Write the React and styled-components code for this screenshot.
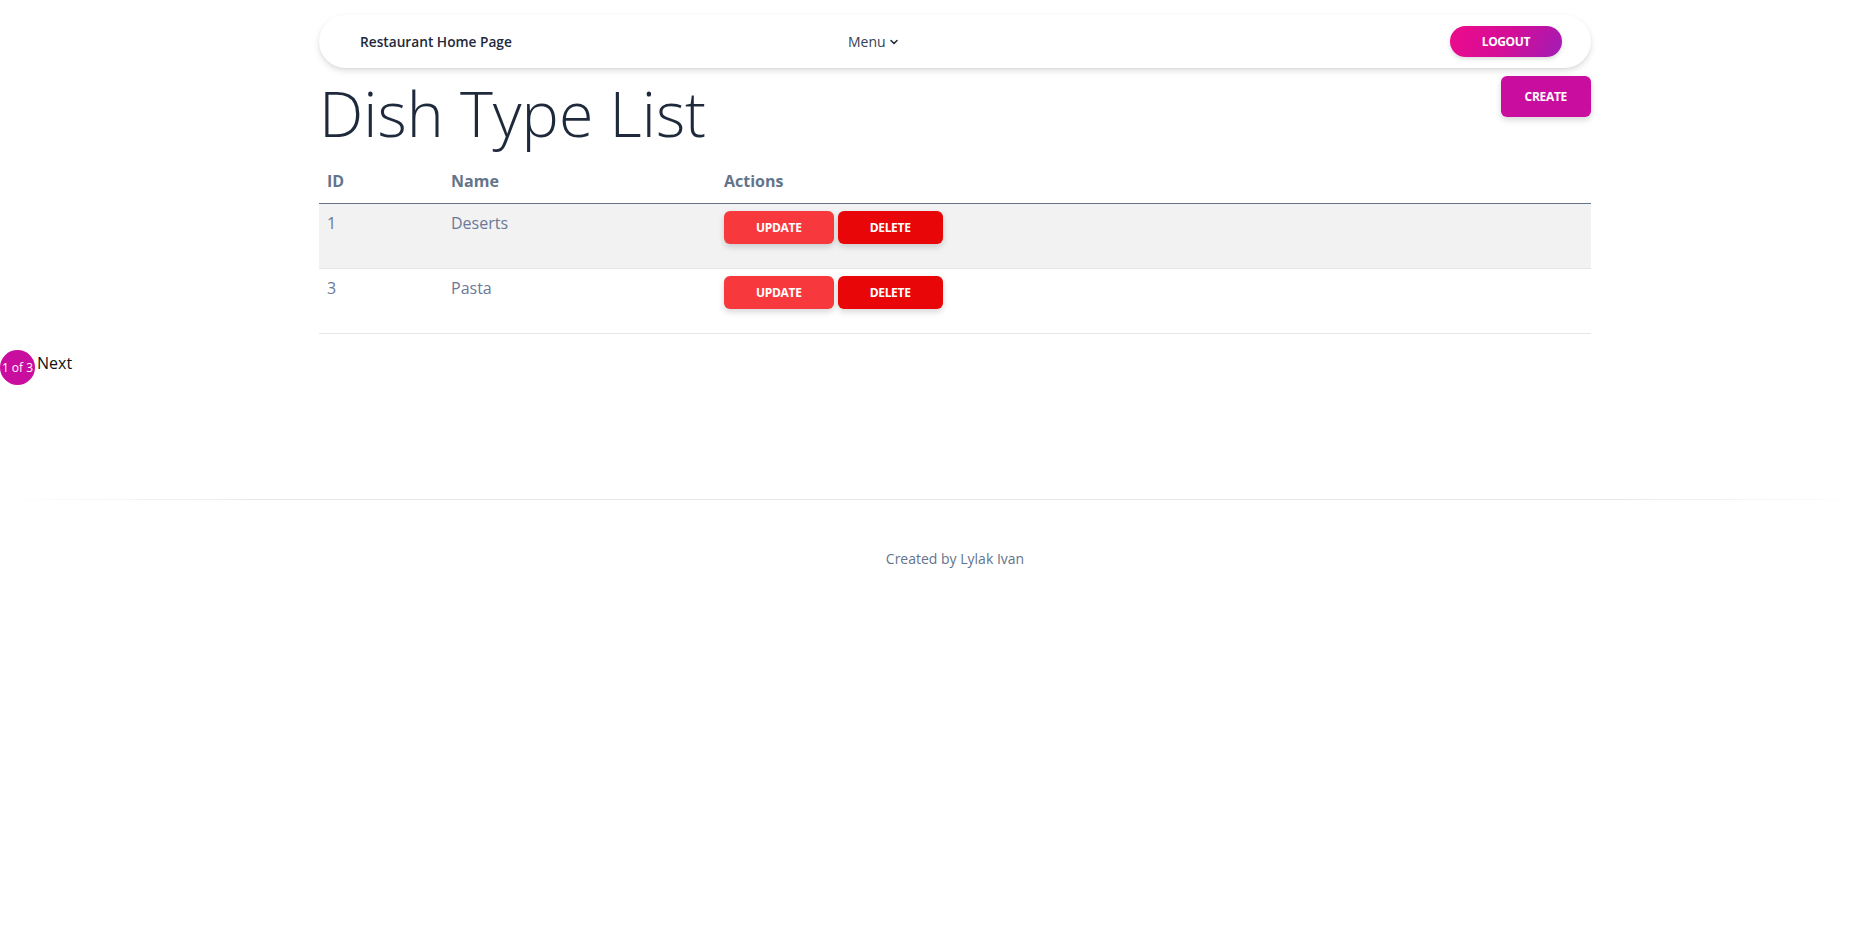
import React from "react";
import styled, { createGlobalStyle } from "styled-components";

const GlobalStyle = createGlobalStyle`
  html, body { margin: 0; padding: 0; background: #ffffff; }
  body { font-family: "Open Sans", "Noto Sans", Arial, sans-serif; color: #1e293b; }
  * { box-sizing: border-box; }
`;

const Page = styled.div`
  padding-left: 40px;
`;

const Container = styled.div`
  max-width: 1272px;
  margin: 0 auto;
`;

const Navbar = styled.nav`
  margin-top: 15px;
  height: 53px;
  border-radius: 27px;
  background: #fff;
  box-shadow: 0 3px 6px rgba(0, 0, 0, 0.12), 0 1px 2px rgba(0, 0, 0, 0.05);
  display: grid;
  grid-template-columns: 488px auto 1fr;
  align-items: center;
  padding: 0 29px 0 41px;
`;

const Brand = styled.a`
  font-size: 13.7px;
  font-weight: 600;
  color: #1e293b;
  text-decoration: none;
`;

const MenuToggle = styled.button`
  display: flex;
  align-items: center;
  gap: 2px;
  border: none;
  background: none;
  padding: 0;
  font-family: inherit;
  font-size: 14px;
  font-weight: 400;
  color: #334155;
  cursor: pointer;
`;

const PillButton = styled.button`
  justify-self: end;
  height: 31px;
  padding: 0 32px;
  border: none;
  border-radius: 16px;
  background: linear-gradient(120deg, #ee0b8b 0%, #d40d97 50%, #a11cb5 100%);
  color: #fff;
  font-family: inherit;
  font-size: 12px;
  font-weight: 700;
  letter-spacing: -0.4px;
  text-transform: uppercase;
  box-shadow: 0 2px 4px rgba(0, 0, 0, 0.15);
  cursor: pointer;
`;

const Header = styled.div`
  display: flex;
  justify-content: space-between;
  align-items: flex-start;
  margin-top: 8px;
`;

const Title = styled.h1`
  margin: 1px 0 0 0;
  font-size: 62.7px;
  line-height: 72px;
  font-weight: 300;
  color: #1e293b;
`;

const ActionButton = styled.button`
  height: ${(p) => p.$h}px;
  padding: 0 ${(p) => p.$px}px;
  border: none;
  border-radius: 6px;
  background: ${(p) => p.$bg};
  color: #fff;
  font-family: inherit;
  font-size: 12px;
  font-weight: 700;
  letter-spacing: -0.3px;
  text-transform: uppercase;
  box-shadow: 0 3px 6px rgba(0, 0, 0, 0.16);
  cursor: pointer;
`;

const Table = styled.table`
  width: 100%;
  margin-top: 10px;
  border-collapse: collapse;
`;

const Th = styled.th`
  text-align: left;
  padding: 10px 8px;
  font-size: 16px;
  line-height: 24px;
  font-weight: 700;
  color: #64748b;
  border-bottom: 1px solid #64748b;
  width: ${(p) => p.$w || "auto"};
`;

const Tr = styled.tr`
  background: ${(p) => (p.$striped ? "#f2f2f2" : "#ffffff")};
  border-bottom: 1px solid #e5e7eb;
`;

const Td = styled.td`
  vertical-align: top;
  padding: 7px 8px 0;
  height: 65px;
  font-size: 16px;
  line-height: 24px;
  font-weight: 400;
  color: #6b7896;
`;

const Actions = styled.div`
  display: flex;
  gap: 4px;
`;

const Pagination = styled.div`
  display: flex;
  align-items: flex-start;
  gap: 2px;
  margin-top: 16px;
`;

const PageBadge = styled.span`
  display: flex;
  align-items: center;
  justify-content: center;
  width: 35px;
  height: 35px;
  border-radius: 50%;
  background: #c90d9e;
  color: #fff;
  font-size: 12px;
  white-space: nowrap;
`;

const NextLink = styled.a`
  font-size: 16px;
  line-height: 24px;
  color: #111;
  margin-top: 1px;
  cursor: pointer;
`;

const FooterLine = styled.hr`
  margin: 114px 0 0;
  border: none;
  height: 1px;
  background: linear-gradient(
    to right,
    rgba(229, 231, 235, 0),
    #e5e7eb 15%,
    #e5e7eb 85%,
    rgba(229, 231, 235, 0)
  );
`;

const Footer = styled.footer`
  padding-left: 40px;
  margin-top: 49px;
  text-align: center;
  font-size: 14px;
  line-height: 20px;
  color: #64748b;
`;

const Chevron = () => (
  <svg width="12" height="12" viewBox="0 0 24 24" fill="none" stroke="#1e293b" strokeWidth="3" strokeLinecap="round" strokeLinejoin="round">
    <path d="M6 9l6 6 6-6" />
  </svg>
);

const rows = [
  { id: 1, name: "Deserts" },
  { id: 3, name: "Pasta" },
];

export default function App() {
  return (
    <>
      <GlobalStyle />
      <Page>
        <Container>
          <Navbar>
            <Brand>Restaurant Home Page</Brand>
            <MenuToggle>
              Menu <Chevron />
            </MenuToggle>
            <PillButton>Logout</PillButton>
          </Navbar>
          <Header>
            <Title>Dish Type List</Title>
            <ActionButton $h={41} $px={24} $bg="#c90d9e">Create</ActionButton>
          </Header>
          <Table>
            <thead>
              <tr>
                <Th $w="124px">ID</Th>
                <Th $w="273px">Name</Th>
                <Th>Actions</Th>
              </tr>
            </thead>
            <tbody>
              {rows.map((r, i) => (
                <Tr key={r.id} $striped={i % 2 === 0}>
                  <Td>{r.id}</Td>
                  <Td>{r.name}</Td>
                  <Td>
                    <Actions>
                      <ActionButton $h={33} $px={32} $bg="#f7393d">Update</ActionButton>
                      <ActionButton $h={33} $px={32} $bg="#e90609">Delete</ActionButton>
                    </Actions>
                  </Td>
                </Tr>
              ))}
            </tbody>
          </Table>
        </Container>
      </Page>
      <Pagination>
        <PageBadge>1 of 3</PageBadge>
        <NextLink>Next</NextLink>
      </Pagination>
      <FooterLine />
      <Footer>Created by Lylak Ivan</Footer>
    </>
  );
}
